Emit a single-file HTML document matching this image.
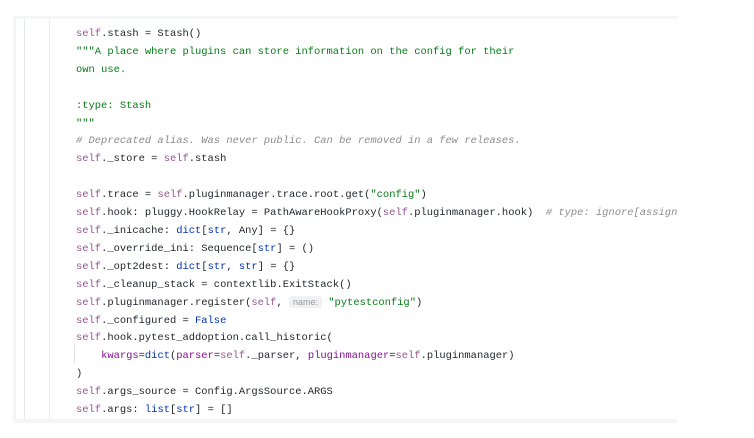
<!DOCTYPE html><html><head><style>
body{margin:0;width:754px;height:438px;background:#fff;position:relative;overflow:hidden}
.panel{position:absolute;left:13px;top:16px;width:664px;height:407px;background:#f4f5f7}
.in{position:absolute;left:3px;top:3px;right:0;bottom:4px;background:#fff;overflow:hidden}
.l1{position:absolute;left:8px;top:0;bottom:0;width:1px;background:#e6e7ea}
.l2{position:absolute;left:33px;top:0;bottom:0;width:1px;background:#ececef}
pre{position:absolute;left:60px;top:7px;margin:0;font:10.45px/17.9px "Liberation Mono",monospace;color:#1f2328;white-space:pre}
.s{color:#94558d}.g{color:#067d17}.c{color:#8c8c8c;font-style:italic}.b{color:#0033b3}.k{color:#871094}.t{color:#1750eb}
.h{font:9px "Liberation Sans",sans-serif;color:#999;background:#f0f1f3;border-radius:3px;padding:1px 4px}
.v{position:absolute;left:58px;top:326px;width:1px;height:18px;background:#e0e0e0}
</style></head><body><div class="panel"><div class="in"><div class="l1"></div><div class="l2"></div><div class="v"></div>
<pre><span class="s">self</span>.stash = Stash()
<span class="g">"""A place where plugins can store information on the config for their
own use.

:type: Stash
"""</span>
<span class="c"># Deprecated alias. Was never public. Can be removed in a few releases.</span>
<span class="s">self</span>._store = <span class="s">self</span>.stash

<span class="s">self</span>.trace = <span class="s">self</span>.pluginmanager.trace.root.get(<span class="g">"config"</span>)
<span class="s">self</span>.hook: pluggy.HookRelay = PathAwareHookProxy(<span class="s">self</span>.pluginmanager.hook)  <span class="c"># type: ignore[assignment]</span>
<span class="s">self</span>._inicache: <span class="b">dict</span>[<span class="b">str</span>, Any] = {}
<span class="s">self</span>._override_ini: Sequence[<span class="b">str</span>] = ()
<span class="s">self</span>._opt2dest: <span class="b">dict</span>[<span class="b">str</span>, <span class="b">str</span>] = {}
<span class="s">self</span>._cleanup_stack = contextlib.ExitStack()
<span class="s">self</span>.pluginmanager.register(<span class="s">self</span>, <span class="h">name:</span> <span class="g">"pytestconfig"</span>)
<span class="s">self</span>._configured = <span class="b">False</span>
<span class="s">self</span>.hook.pytest_addoption.call_historic(
    <span class="k">kwargs</span>=<span class="b">dict</span>(<span class="k">parser</span>=<span class="s">self</span>._parser, <span class="k">pluginmanager</span>=<span class="s">self</span>.pluginmanager)
)
<span class="s">self</span>.args_source = Config.ArgsSource.ARGS
<span class="s">self</span>.args: <span class="b">list</span>[<span class="b">str</span>] = []</pre></div></div></body></html>
